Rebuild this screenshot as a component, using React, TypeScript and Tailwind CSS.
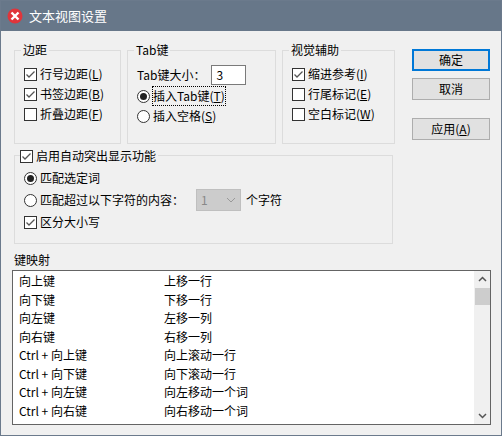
import React from "react";

const font = { fontFamily: '"Noto Sans CJK SC", "Noto Sans", sans-serif' };

function Check({ on, label, u }: { on?: boolean; label: string; u?: string }) {
  return (
    <div className="flex items-center gap-[3px] h-[20px]">
      <div className="w-[13px] h-[13px] border border-[#333] bg-white flex items-center justify-center">
        {on && (
          <svg width="11" height="11" viewBox="0 0 11 11">
            <path d="M1.5 5.5 L4 8 L9.5 2.5" stroke="#555" strokeWidth="1.3" fill="none" />
          </svg>
        )}
      </div>
      <span>
        {label}
        {u && <span>(<span className="underline">{u}</span>)</span>}
      </span>
    </div>
  );
}

function Radio({ on, label, u, focus }: { on?: boolean; label: string; u?: string; focus?: boolean }) {
  return (
    <div className="flex items-center gap-[3px] h-[20px]">
      <div className="w-[13px] h-[13px] rounded-full border border-[#333] bg-white flex items-center justify-center">
        {on && <div className="w-[7px] h-[7px] rounded-full bg-[#222]" />}
      </div>
      <span className={focus ? "outline outline-1 outline-dotted outline-black" : ""}>
        {label}
        {u && <span>(<span className="underline">{u}</span>)</span>}
      </span>
    </div>
  );
}

function Group({ title, className, children }: { title: string; className: string; children: React.ReactNode }) {
  return (
    <div className={"relative border border-[#dcdcdc] " + className}>
      <span className="absolute -top-[10px] left-[6px] bg-[#f0f0f0] px-[2px] leading-[18px]">{title}</span>
      {children}
    </div>
  );
}

function Btn({ label, u, def }: { label: string; u?: string; def?: boolean }) {
  return (
    <div
      className={
        "w-[78px] h-[22px] flex items-center justify-center bg-[#e1e1e1] " +
        (def ? "border-2 border-[#0078d7]" : "border border-[#adadad]")
      }
    >
      {label}
      {u && <span>(<span className="underline">{u}</span>)</span>}
    </div>
  );
}

const rows = [
  ["向上键", "上移一行"],
  ["向下键", "下移一行"],
  ["向左键", "左移一列"],
  ["向右键", "右移一列"],
  ["Ctrl + 向上键", "向上滚动一行"],
  ["Ctrl + 向下键", "向下滚动一行"],
  ["Ctrl + 向左键", "向左移动一个词"],
  ["Ctrl + 向右键", "向右移动一个词"],
];

export default function App() {
  return (
    <div style={font} className="w-[502px] h-[436px] bg-[#f0f0f0] border border-[#6b7a8c] text-[12px] text-black flex flex-col overflow-hidden relative">
      <div className="h-[30px] bg-[#677789] flex items-center pl-[6px] gap-[6px] text-white text-[13px] shrink-0">
        <svg width="16" height="16" viewBox="0 0 16 16">
          <circle cx="8" cy="8" r="7.5" fill="#e0353b" />
          <path d="M4.5 4.5 L11.5 11.5 M11.5 4.5 L4.5 11.5" stroke="white" strokeWidth="2.4" />
        </svg>
        <span>文本视图设置</span>
      </div>
      <div className="flex pl-[13px] pt-[19px]">
        <div className="flex flex-col">
          <div className="flex gap-[6px]">
            <Group title="边距" className="w-[107px] h-[94px] pt-[13px] pl-[9px]">
              <Check on label="行号边距" u="L" />
              <Check on label="书签边距" u="B" />
              <Check label="折叠边距" u="F" />
            </Group>
            <Group title="Tab键" className="w-[149px] h-[94px] pt-[13px] pl-[9px]">
              <div className="flex items-center h-[22px] gap-[6px]">
                <span>Tab键大小：</span>
                <div className="w-[35px] h-[20px] border border-[#7a7a7a] bg-white pl-[4px] leading-[18px]">3</div>
              </div>
              <Radio on focus label="插入Tab键" u="T" />
              <Radio label="插入空格" u="S" />
            </Group>
            <Group title="视觉辅助" className="w-[113px] h-[94px] pt-[13px] pl-[9px]">
              <Check on label="缩进参考" u="I" />
              <Check label="行尾标记" u="E" />
              <Check label="空白标记" u="W" />
            </Group>
          </div>
          <div className="mt-[11px] w-[379px] h-[89px] border border-[#dcdcdc] relative pl-[9px] pt-[12px]">
            <div className="absolute -top-[10px] left-[5px] bg-[#f0f0f0] pr-[2px]">
              <Check on label="启用自动突出显示功能" />
            </div>
            <Radio on label="匹配选定词" />
            <div className="flex items-center h-[24px]">
              <Radio label="匹配超过以下字符的内容：" />
              <div className="ml-[12px] w-[45px] h-[22px] bg-[#cccccc] border border-[#bfbfbf] flex items-center justify-between px-[4px] text-[#888]">
                <span>1</span>
                <svg width="10" height="6" viewBox="0 0 10 6"><path d="M1 1 L5 5 L9 1" stroke="#999" fill="none" /></svg>
              </div>
              <span className="ml-[5px]">个字符</span>
            </div>
            <Check on label="区分大小写" />
          </div>
        </div>
        <div className="ml-[17px] -mt-[1px] flex flex-col">
          <Btn def label="确定" />
          <div className="h-[7px]" />
          <Btn label="取消" />
          <div className="h-[18px]" />
          <Btn label="应用" u="A" />
        </div>
      </div>
      <div className="pl-[13px] mt-[7px] leading-[18px]">键映射</div>
      <div className="ml-[11px] mt-[1px] w-[479px] h-[155px] border border-[#646464] bg-white flex">
        <div className="flex-1 pl-[6px] pt-[1px]">
          {rows.map(([a, b]) => (
            <div key={a} className="flex h-[18.5px] items-center">
              <span className="w-[145px]">{a}</span>
              <span>{b}</span>
            </div>
          ))}
        </div>
        <div className="w-[16px] bg-[#f0f0f0] flex flex-col items-center">
          <svg className="mt-[5px]" width="9" height="6" viewBox="0 0 9 6"><path d="M1 5 L4.5 1.5 L8 5" stroke="#555" strokeWidth="1.5" fill="none" /></svg>
          <div className="mt-[6px] w-[15px] h-[17px] bg-[#cdcdcd]" />
          <div className="flex-1" />
          <svg className="mb-[5px]" width="9" height="6" viewBox="0 0 9 6"><path d="M1 1 L4.5 4.5 L8 1" stroke="#555" strokeWidth="1.5" fill="none" /></svg>
        </div>
      </div>
    </div>
  );
}
